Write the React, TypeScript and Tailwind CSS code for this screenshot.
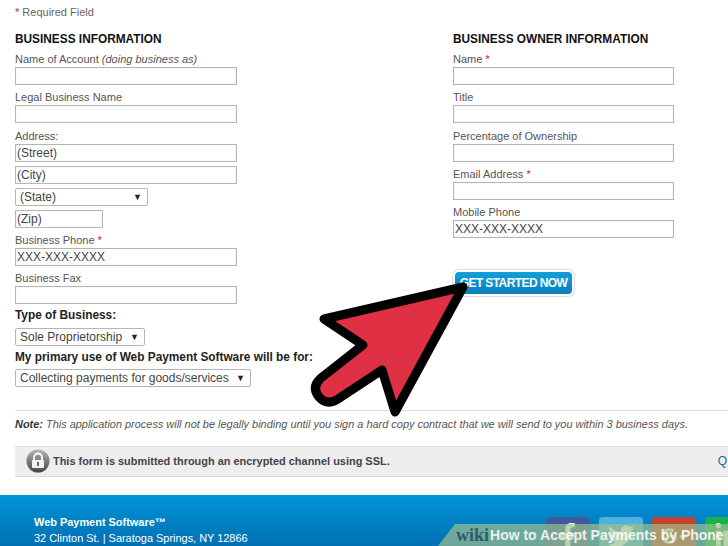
import { FaFacebookF, FaGooglePlusG, FaLinkedinIn, FaTwitter } from "react-icons/fa";

function Req() {
	return <span className="text-[#c0272d]">*</span>;
}

function Label({ children }: { children: React.ReactNode }) {
	return <div className="h-[14px] text-[11px] leading-[14px] text-[#555]">{children}</div>;
}

function Input({ value, className = "w-full" }: { value?: string; className?: string }) {
	return (
		<div className={`h-[18px] border border-[#b5b5b5] shadow-[inset_0_0_1px_#ccc] bg-white pl-[1px] text-[12px] leading-[16px] text-[#444] ${className}`}>
			{value}
		</div>
	);
}

function Select({ value, className }: { value: string; className: string }) {
	return (
		<div className={`h-[18px] flex items-center justify-between whitespace-nowrap border border-[#b5b5b5] rounded-[2px] bg-white pl-[4px] pr-[5px] text-[12px] leading-[16px] text-[#444] ${className}`}>
			<span>{value}</span>
			<span className="text-[9px] text-[#222]">▼</span>
		</div>
	);
}

function Field({ label, value, width }: { label: React.ReactNode; value?: string; width: string }) {
	return (
		<div className="flex flex-col gap-[1px] mb-[5.3px]">
			<Label>{label}</Label>
			<Input value={value} className={width} />
		</div>
	);
}

function Social({ color, children }: { color: string; children: React.ReactNode }) {
	return (
		<div className={`w-[44px] h-[40px] rounded-[4px] flex justify-center pt-[6px] text-[26px] text-white ${color}`}>
			{children}
		</div>
	);
}

export default function App() {
	const left = "w-[222px]";
	const right = "w-[221px]";

	return (
		<div className="relative w-[728px] h-[546px] overflow-hidden bg-white font-['Liberation_Sans',Arial,sans-serif]">
			<div className="h-[495px] pt-[5px]">
				<div className="pl-[15px] text-[11px] leading-[14px] text-[#666]">
					<Req /> Required Field
				</div>

				<div className="flex pl-[15px] mt-[13px]">
					{/* Business information */}
					<div className="w-[438px]">
						<h2 className="text-[11.85px] leading-[14px] font-bold text-[#111] mb-[6px]">BUSINESS INFORMATION</h2>
						<Field width={left} label={<>Name of Account <i>(doing business as)</i></>} />
						<Field width={left} label="Legal Business Name" />
						<div className="flex flex-col gap-[4px]">
							<div className="flex flex-col gap-[1px]">
								<Label>Address:</Label>
								<Input value="(Street)" className={left} />
							</div>
							<Input value="(City)" className={left} />
							<Select value="(State)" className="w-[133px]" />
							<Input value="(Zip)" className="w-[88px]" />
						</div>
						<div className="mt-[5px]">
							<Field width={left} label={<>Business Phone <Req /></>} value="XXX-XXX-XXXX" />
							<Field width={left} label="Business Fax" />
						</div>
						<div className="text-[11.85px] leading-[15px] font-bold text-[#222] -mt-[1px] mb-[4.5px]">Type of Business:</div>
						<Select value="Sole Proprietorship" className="w-[130px]" />
						<div className="text-[11.85px] leading-[15px] font-bold text-[#222] mt-[4.5px] mb-[4px]">My primary use of Web Payment Software will be for:</div>
						<Select value="Collecting payments for goods/services" className="w-[236px]" />
					</div>

					{/* Owner information */}
					<div className="w-[275px]">
						<h2 className="text-[11.85px] leading-[14px] font-bold text-[#111] mb-[6px]">BUSINESS OWNER INFORMATION</h2>
						<Field width={right} label={<>Name <Req /></>} />
						<Field width={right} label="Title" />
						<Field width={right} label="Percentage of Ownership" />
						<Field width={right} label={<>Email Address <Req /></>} />
						<Field width={right} label="Mobile Phone" value="XXX-XXX-XXXX" />
						<div className="mt-[32px] w-[121px] h-[26px] rounded-[6px] border-2 border-white shadow-[0_0_2px_#888] bg-gradient-to-b from-[#12a0d8] to-[#0a7fbd] text-center whitespace-nowrap text-[12px] leading-[22px] font-bold tracking-[-0.6px] text-white">
							GET STARTED NOW
						</div>
					</div>
				</div>

				<div className="ml-[15px] mt-[22.5px] border-t border-[#dedede] pt-[6px] text-[10.95px] leading-[14px] italic text-[#555]">
					<b className="text-[#333]">Note:</b> This application process will not be legally binding until you sign a hard copy contract that we will send to you within 3 business days.
				</div>

				<div className="ml-[15px] mt-[15px] h-[31px] flex items-center justify-between border-y border-[#dcdcdc] bg-[#eeeeee] pl-[11px] pr-[1px]">
					<div className="flex items-center gap-[3px]">
						<svg width="24" height="24" viewBox="0 0 24 24">
							<defs>
								<linearGradient id="lockBg" x1="0" y1="0" x2="0" y2="1">
									<stop offset="0" stopColor="#b5b5b5" />
									<stop offset="1" stopColor="#444" />
								</linearGradient>
							</defs>
							<circle cx="12" cy="12" r="11.5" fill="url(#lockBg)" />
							<path d="M8 11V8.5a4 4 0 0 1 8 0V11" fill="none" stroke="#fff" strokeWidth="1.8" />
							<rect x="6" y="11" width="12" height="8" rx="1" fill="#f4f4f4" />
							<rect x="11" y="13" width="2" height="4" fill="#666" />
						</svg>
						<span className="text-[10.95px] font-bold text-[#444]">This form is submitted through an encrypted channel using SSL.</span>
					</div>
					<span className="text-[12px] text-[#2a5ea8]">Q</span>
				</div>
			</div>

			{/* Footer */}
			<div className="h-[51px] flex justify-between bg-gradient-to-b from-[#0095d6] to-[#0070b4] pl-[34px] pt-[19px] overflow-hidden">
				<div className="text-[10.95px] leading-[16px] text-white">
					<b>Web Payment Software™</b>
					<div>32 Clinton St. | Saratoga Springs, NY 12866</div>
				</div>
				<div className="flex gap-[9px] pt-[3px] -mr-[21px]">
					<Social color="bg-[#3f5a9e]"><FaFacebookF /></Social>
					<Social color="bg-[#4fb3e0]"><FaTwitter /></Social>
					<Social color="bg-[#c8402f]"><FaGooglePlusG /></Social>
					<Social color="bg-[#17b34a]"><FaLinkedinIn /></Social>
				</div>
			</div>

			{/* Pointer arrow over the page */}
			<svg className="absolute left-0 top-0 pointer-events-none" width="728" height="546" viewBox="0 0 728 546">
				<path
					d="M463 287 L324 319 L363 345 L321 378 Q311 387 319 397 Q327 406 338 399 L382 370 L395 412 Z"
					fill="#e03144"
					stroke="#000"
					strokeWidth="9"
					strokeLinejoin="round"
				/>
			</svg>

			{/* Watermark band */}
			<div className="absolute right-0 bottom-0 w-[290px] h-[22px] bg-[#9cbf8c]/70 [clip-path:polygon(17px_0,100%_0,100%_100%,0_100%)] flex items-center pl-[18px] whitespace-nowrap">
				<span className="font-['Liberation_Serif',serif] text-[18px] font-bold text-[#2c5a70] mr-[1px]">wiki</span>
				<span className="text-[14px] font-bold text-white/85">How to Accept Payments by Phone</span>
			</div>
		</div>
	);
}
